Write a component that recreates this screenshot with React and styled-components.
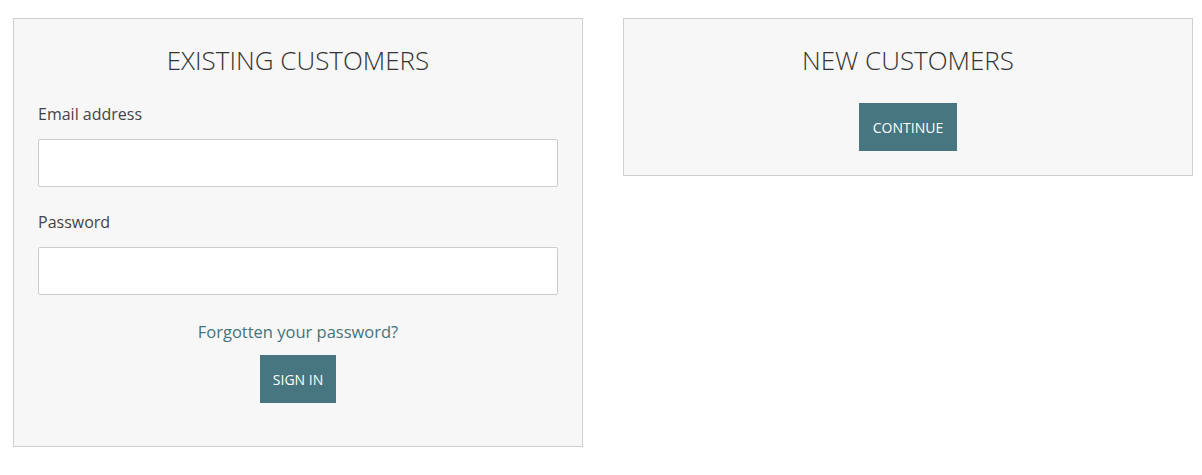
import styled, { createGlobalStyle } from "styled-components";

const GlobalStyle = createGlobalStyle`
  body {
    margin: 0;
    background: #fff;
    font-family: "Open Sans", "Liberation Sans", sans-serif;
  }
`;

const Page = styled.div`
  display: grid;
  grid-template-columns: 570px 570px;
  gap: 40px;
  align-items: start;
  padding: 18px 9px 0 13px;
`;

const Panel = styled.section`
  background: #f7f7f7;
  border: 1px solid #cfcfcf;
  padding: 25px 24px ${(p) => (p.$tall ? "43px" : "24px")};
  display: flex;
  flex-direction: column;
`;

const Title = styled.h2`
  margin: 0;
  text-align: center;
  font-family: "Open Sans", sans-serif;
  font-weight: 300;
  font-size: 26px;
  line-height: 32px;
  color: #333;
  text-transform: uppercase;
`;

const Form = styled.form`
  display: flex;
  flex-direction: column;
  margin-top: 28px;
`;

const Field = styled.div`
  display: flex;
  flex-direction: column;
  gap: 15px;
  margin-bottom: 25px;
`;

const Label = styled.label`
  font-family: "Open Sans", sans-serif;
  font-size: 16px;
  line-height: 20px;
  color: #444;
`;

const Input = styled.input`
  box-sizing: border-box;
  width: 100%;
  height: 48px;
  border: 1px solid #cccccc;
  border-radius: 2px;
  background: #fff;
  padding: 0 12px;
  font-size: 15px;
  outline: none;
`;

const Actions = styled.div`
  display: flex;
  flex-direction: column;
  align-items: center;
  gap: 13px;
  margin-top: ${(p) => p.$top || "0"};
`;

const Link = styled.a`
  font-family: "Open Sans", sans-serif;
  font-size: 16.5px;
  line-height: 20px;
  color: #44737d;
  text-decoration: none;
  margin-top: 2px;
`;

const Button = styled.button`
  height: 48px;
  padding: 0 ${(p) => p.$pad || "13px"};
  border: none;
  background: #477580;
  color: #fff;
  font-family: "Open Sans", sans-serif;
  font-size: 14px;
  text-transform: uppercase;
  cursor: pointer;
`;

export default function App() {
  return (
    <>
      <GlobalStyle />
      <Page>
        <Panel $tall>
          <Title>Existing Customers</Title>
          <Form onSubmit={(e) => e.preventDefault()}>
            <Field>
              <Label htmlFor="email">Email address</Label>
              <Input id="email" type="email" />
            </Field>
            <Field>
              <Label htmlFor="password">Password</Label>
              <Input id="password" type="password" />
            </Field>
            <Actions>
              <Link href="#">Forgotten your password?</Link>
              <Button type="submit">Sign in</Button>
            </Actions>
          </Form>
        </Panel>
        <Panel>
          <Title>New Customers</Title>
          <Actions $top="27px">
            <Button $pad="14px">Continue</Button>
          </Actions>
        </Panel>
      </Page>
    </>
  );
}
